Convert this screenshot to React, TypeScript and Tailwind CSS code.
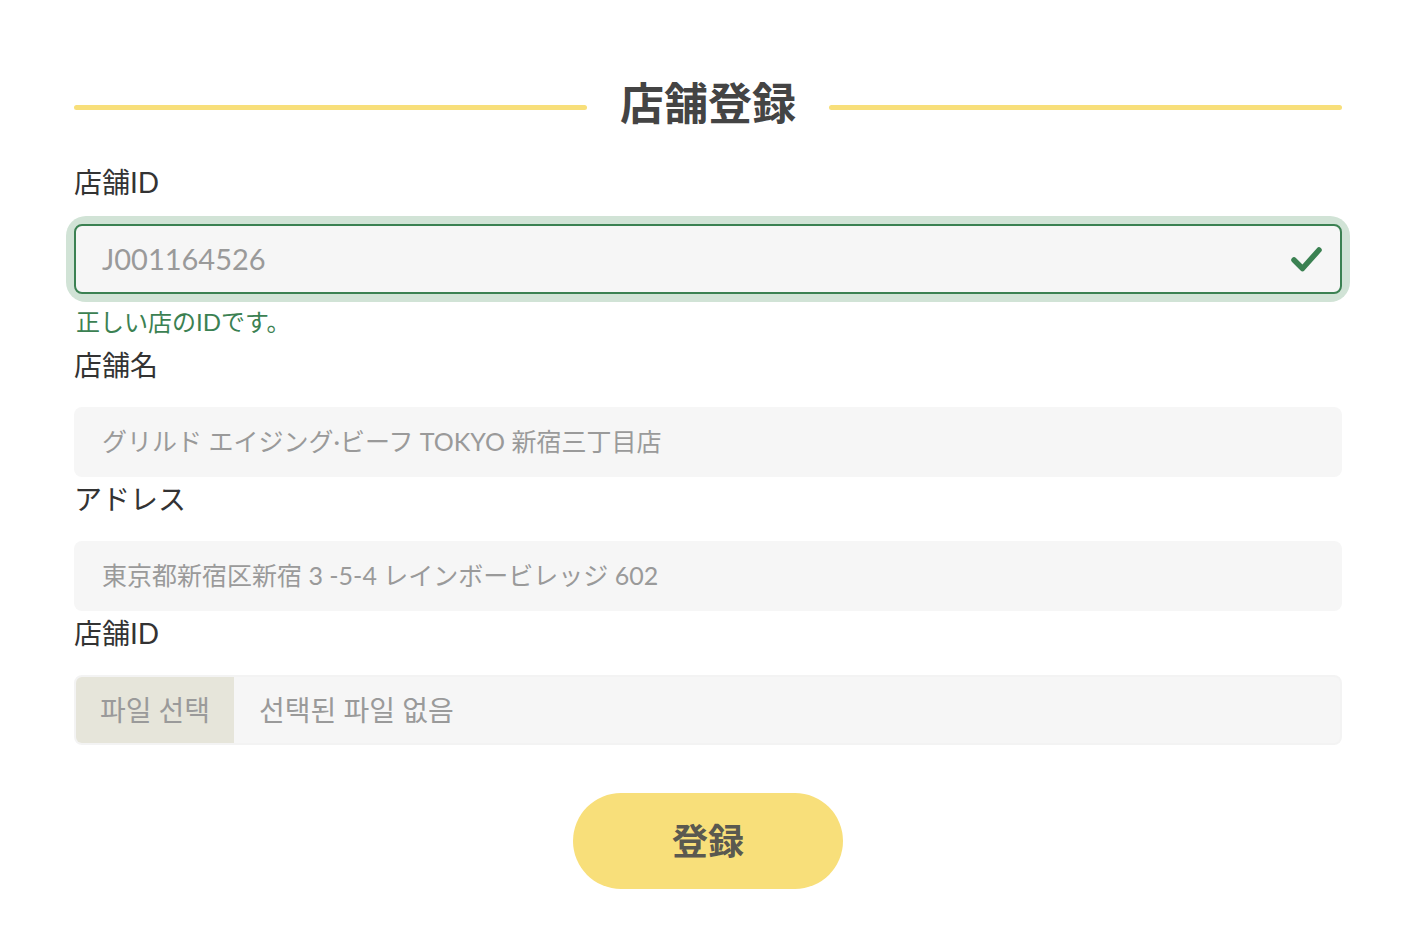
import React from 'react';

const jp = "font-['Lato','Noto_Sans_CJK_JP',sans-serif]";
const kr = "font-['Lato','Noto_Sans_CJK_KR',sans-serif]";

function Label({ children }: { children: React.ReactNode }) {
  return <div className="h-[44px] mb-5 flex items-center text-[28px] text-[#333]">{children}</div>;
}

function Field({ value }: { value: string }) {
  return (
    <div className="h-[70px] rounded-lg bg-[#f6f6f6] flex items-center px-7 text-[25px] text-[#9a9a9a]">
      {value}
    </div>
  );
}

export default function App() {
  return (
    <div className={`min-h-screen bg-white ${jp}`}>
      <div className="ml-[74px] w-[1268px] pt-[75px]">
        {/* Title */}
        <div className="flex items-center h-[56px]">
          <div className="flex-1 h-[5px] mt-2 rounded-full bg-[#f8df7a]" />
          <h1 className="px-[33px] text-[44px] font-bold text-[#444] leading-none">店舗登録</h1>
          <div className="flex-1 h-[5px] mt-2 rounded-full bg-[#f8df7a]" />
        </div>

        <div className="mt-[29px]">
          <Label>店舗ID</Label>
          <div className="rounded-[12px] ring-8 ring-[#d1e3d6]">
            <div className="h-[70px] rounded-lg border-2 border-[#3b8152] bg-[#f6f6f6] flex items-center justify-between pl-[26px] pr-4">
              <span className="text-[29px] text-[#9a9a9a]">J001164526</span>
              <svg width="34" height="30" viewBox="0 0 34 30" fill="none">
                <path d="M4 16 L12.5 24.5 L29 6" stroke="#3b8152" strokeWidth="5.5" strokeLinecap="round" strokeLinejoin="round" />
              </svg>
            </div>
          </div>
          <div className="mt-[10px] h-[36px] flex items-center text-[24px] text-[#3b8152] pl-0.5">正しい店のIDです。</div>
        </div>

        <div className="mt-[3px]">
          <Label>店舗名</Label>
          <Field value="グリルド エイジング·ビーフ TOKYO 新宿三丁目店" />
        </div>

        <div>
          <Label>アドレス</Label>
          <Field value="東京都新宿区新宿 3 -5-4 レインボービレッジ 602" />
        </div>

        <div>
          <Label>店舗ID</Label>
          <div className={`h-[70px] rounded-lg bg-[#f6f6f6] border-2 border-[#f3f3f3] flex items-stretch overflow-hidden text-[28px] text-[#9a9a9a] ${kr}`}>
            <div className="w-[158px] bg-[#e6e5da] flex items-center justify-center">파일 선택</div>
            <div className="flex items-center pl-[25px]">선택된 파일 없음</div>
          </div>
        </div>

        <div className="flex justify-center mt-12">
          <button className="w-[270px] h-[96px] rounded-full bg-[#f8df7a] text-[36px] font-bold text-[#5a5950]">登録</button>
        </div>
      </div>
    </div>
  );
}
